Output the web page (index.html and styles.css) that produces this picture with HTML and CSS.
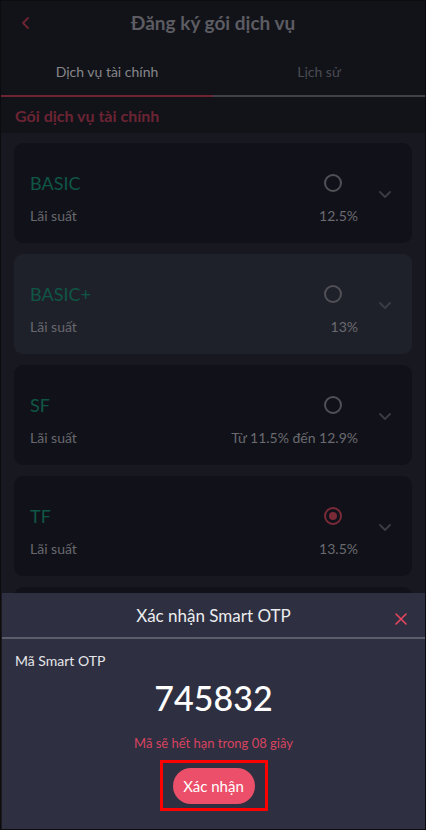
FILE: index.html
```html
<!DOCTYPE html>
<html>
<head>
    <meta charset="utf-8">
    <title>Đăng ký gói dịch vụ</title>
    <link rel="stylesheet" href="styles.css">
</head>
<body>
    <div class="screen">
        <div class="top">
            <div class="header">
                <span class="back">
                    <svg width="14" height="14" viewBox="0 0 14 14"><path d="M9 2 L4 7 L9 12" fill="none" stroke="#6a2431" stroke-width="2" stroke-linecap="round" stroke-linejoin="round"/></svg>
                </span>
                <div class="title">Đăng ký gói dịch vụ</div>
            </div>
            <div class="tabs">
                <div class="tab active">Dịch vụ tài chính</div>
                <div class="tab">Lịch sử</div>
            </div>
            <div class="section-title">Gói dịch vụ tài chính</div>
        </div>

        <div class="list">
            <div class="card">
                <div class="card-main">
                    <div class="row">
                        <span class="name">BASIC</span>
                        <span class="radio"></span>
                    </div>
                    <div class="row">
                        <span class="label">Lãi suất</span>
                        <span class="value">12.5%</span>
                    </div>
                </div>
                <div class="chev"><svg width="14" height="10" viewBox="0 0 14 10"><path d="M2 3 L7 8 L12 3" fill="none" stroke="#3c3d44" stroke-width="1.8" stroke-linecap="round" stroke-linejoin="round"/></svg></div>
            </div>
            <div class="card light">
                <div class="card-main">
                    <div class="row">
                        <span class="name">BASIC+</span>
                        <span class="radio"></span>
                    </div>
                    <div class="row">
                        <span class="label">Lãi suất</span>
                        <span class="value">13%</span>
                    </div>
                </div>
                <div class="chev"><svg width="14" height="10" viewBox="0 0 14 10"><path d="M2 3 L7 8 L12 3" fill="none" stroke="#3c3d44" stroke-width="1.8" stroke-linecap="round" stroke-linejoin="round"/></svg></div>
            </div>
            <div class="card">
                <div class="card-main">
                    <div class="row">
                        <span class="name">SF</span>
                        <span class="radio"></span>
                    </div>
                    <div class="row">
                        <span class="label">Lãi suất</span>
                        <span class="value">Từ 11.5% đến 12.9%</span>
                    </div>
                </div>
                <div class="chev"><svg width="14" height="10" viewBox="0 0 14 10"><path d="M2 3 L7 8 L12 3" fill="none" stroke="#3c3d44" stroke-width="1.8" stroke-linecap="round" stroke-linejoin="round"/></svg></div>
            </div>
            <div class="card">
                <div class="card-main">
                    <div class="row">
                        <span class="name">TF</span>
                        <span class="radio checked"></span>
                    </div>
                    <div class="row">
                        <span class="label">Lãi suất</span>
                        <span class="value">13.5%</span>
                    </div>
                </div>
                <div class="chev"><svg width="14" height="10" viewBox="0 0 14 10"><path d="M2 3 L7 8 L12 3" fill="none" stroke="#3c3d44" stroke-width="1.8" stroke-linecap="round" stroke-linejoin="round"/></svg></div>
            </div>
            <div class="card"></div>
        </div>

        <!-- bottom sheet OTP -->
        <div class="sheet">
            <div class="sheet-head">
                <div class="sheet-title">Xác nhận Smart OTP</div>
                <span class="close">
                    <svg width="12" height="12" viewBox="0 0 12 12"><path d="M1 1 L11 11 M11 1 L1 11" stroke="#e8455f" stroke-width="1.6" stroke-linecap="round"/></svg>
                </span>
            </div>
            <div class="sheet-body">
                <div class="otp-label">Mã Smart OTP</div>
                <div class="otp-code">745832</div>
                <div class="otp-expire">Mã sẽ hết hạn trong 08 giây</div>
                <div class="btn-box">
                    <button class="btn">Xác nhận</button>
                </div>
            </div>
        </div>
    </div>
</body>
</html>
```

FILE: styles.css
```css
* {
    box-sizing: border-box;
}
body {
    margin: 0;
    padding: 0;
    background-color: #0e0e11;
    font-family: "Lato", "Noto Sans", sans-serif;
}
.screen {
    position: relative;
    width: 426px;
    height: 830px;
    overflow: hidden;
    border: 1px solid #0c0c0e;
    background-color: #181920;
    display: flex;
    flex-direction: column;
}
.top {
    background-color: #121319;
}
.header {
    position: relative;
    height: 42px;
    display: flex;
    align-items: center;
    justify-content: center;
}
.back {
    position: absolute;
    left: 18px;
    top: 13px;
}
.title {
    font-size: 19px;
    font-weight: 700;
    color: #5c5c62;
}
.tabs {
    display: flex;
    height: 54px;
}
.tab {
    flex: 1;
    display: flex;
    align-items: center;
    justify-content: center;
    padding-top: 4px;
    font-size: 14px;
    color: #4b4c52;
    border-bottom: 2px solid #3f4048;
}
.tab.active {
    color: #86868b;
    border-bottom-color: #6c2532;
}
.section-title {
    height: 36px;
    display: flex;
    align-items: center;
    padding-left: 14px;
    font-size: 16px;
    font-weight: 700;
    color: #6c2433;
}
.list {
    flex: 1;
    padding: 10px 13px;
    display: flex;
    flex-direction: column;
    gap: 11px;
}
.card {
    flex-shrink: 0;
    height: 100px;
    border-radius: 9px;
    background-color: #111219;
    display: flex;
    padding: 28px 0 0 16px;
}
.card.light {
    background-color: #1f212a;
}
.card-main {
    flex: 1;
    display: flex;
    flex-direction: column;
    gap: 12px;
}
.row {
    display: flex;
    align-items: center;
    justify-content: space-between;
}
.name {
    height: 24px;
    line-height: 24px;
    font-size: 18px;
    color: #0f5646;
}
.label {
    font-size: 14px;
    color: #68686e;
}
.value {
    font-size: 14px;
    color: #6a6a70;
}
.radio {
    width: 18px;
    height: 18px;
    margin-right: 16px;
    border: 2px solid #505056;
    border-radius: 50%;
    display: flex;
    align-items: center;
    justify-content: center;
}
.radio.checked {
    border-color: #7a2a37;
}
.radio.checked::after {
    content: "";
    width: 8px;
    height: 8px;
    border-radius: 50%;
    background-color: #7a2a37;
}
.chev {
    width: 54px;
    display: flex;
    justify-content: center;
    padding-top: 18px;
}
.sheet {
    position: absolute;
    left: 0;
    right: 0;
    bottom: 0;
    height: 236px;
    background-color: #2e3041;
    border-left: 1px solid #1a1a1e;
}
.sheet-head {
    position: relative;
    height: 46px;
    display: flex;
    align-items: center;
    justify-content: center;
    border-bottom: 2px solid #5b5d6b;
}
.sheet-title {
    font-size: 17px;
    font-weight: 400;
    color: #ececee;
}
.close {
    position: absolute;
    right: 18px;
    top: 16px;
}
.sheet-body {
    display: flex;
    flex-direction: column;
    align-items: center;
}
.otp-label {
    align-self: stretch;
    padding: 13px 0 0 13px;
    font-size: 14px;
    line-height: 17px;
    color: #e6e6ea;
}
.otp-code {
    margin-top: 9px;
    font-size: 34px;
    line-height: 40px;
    font-weight: 500;
    color: #ffffff;
}
.otp-expire {
    margin-top: 17px;
    font-size: 13px;
    line-height: 16px;
    color: #d94360;
}
.btn-box {
    margin-top: 9px;
    border: 3px solid #ff0000;
    padding: 5px 10px 4px;
}
.btn {
    display: block;
    width: 82px;
    height: 36px;
    border: none;
    border-radius: 18px;
    background-color: #ec4f69;
    color: #ffffff;
    font-family: inherit;
    font-size: 15px;
}
```
